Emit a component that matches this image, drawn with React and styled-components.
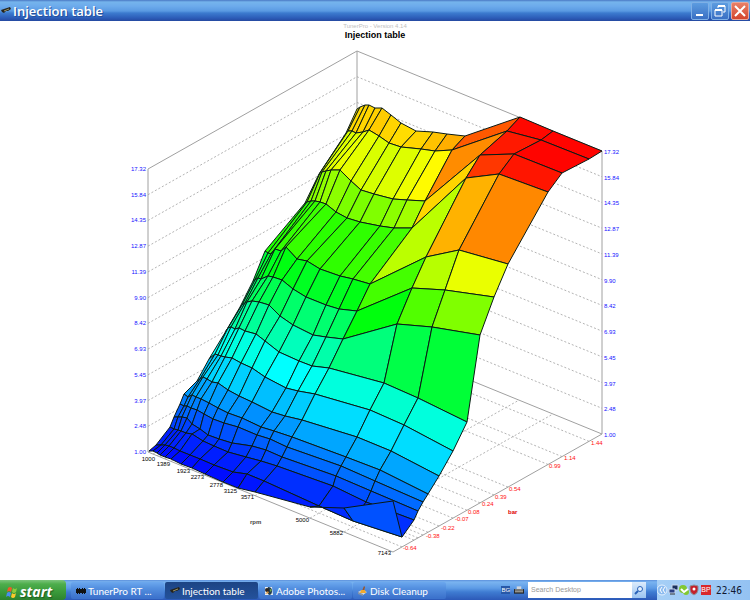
import React from 'react'
import styled, { createGlobalStyle } from 'styled-components'

// Screen positions of the mesh, back row (highest pressure) first,
// every row running from 1000 rpm to 7143 rpm.
const mesh = [
  [[357, 109], [360, 107], [365, 105], [369, 105], [375, 108], [382, 108], [391, 115], [401, 123], [416, 131], [433, 132], [447, 134], [465, 136], [520, 117], [553, 131], [602, 151]],
  [[346, 133], [348, 131], [352, 131], [356, 133], [363, 132], [369, 130], [379, 136], [389, 143], [401, 147], [421, 149], [435, 151], [452, 150], [507, 131], [541, 140], [589, 159]],
  [[319, 174], [320, 173], [322, 172], [326, 171], [331, 170], [340, 170], [351, 181], [361, 190], [374, 194], [393, 199], [407, 200], [425, 201], [480, 155], [514, 154], [562, 173]],
  [[305, 203], [307, 202], [311, 201], [315, 201], [320, 202], [326, 204], [336, 212], [347, 218], [360, 222], [380, 226], [394, 228], [412, 228], [466, 178], [499, 174], [548, 192]],
  [[265, 251], [268, 253], [271, 254], [275, 249], [281, 251], [286, 247], [297, 259], [307, 261], [320, 269], [340, 276], [353, 279], [370, 284], [426, 257], [459, 250], [508, 264]],
  [[253, 281], [255, 280], [258, 278], [261, 279], [268, 276], [273, 277], [282, 280], [293, 289], [306, 297], [326, 305], [339, 309], [357, 311], [412, 288], [445, 290], [494, 297]],
  [[240, 307], [242, 305], [245, 303], [247, 302], [252, 301], [259, 302], [269, 305], [280, 316], [293, 325], [313, 335], [326, 337], [343, 339], [397, 324], [432, 327], [480, 335]],
  [[226, 331], [228, 328], [231, 327], [235, 329], [239, 328], [245, 331], [256, 334], [265, 341], [279, 352], [299, 361], [312, 366], [329, 368], [384, 383], [418, 398], [467, 422]],
  [[209, 359], [215, 354], [218, 355], [221, 356], [225, 357], [232, 358], [241, 363], [252, 368], [265, 377], [286, 388], [298, 391], [315, 394], [370, 410], [404, 425], [453, 451]],
  [[197, 381], [200, 379], [203, 377], [207, 379], [212, 382], [218, 383], [228, 390], [239, 396], [252, 402], [272, 412], [285, 416], [302, 420], [357, 437], [391, 451], [439, 476]],
  [[184, 394], [188, 397], [192, 395], [196, 397], [201, 399], [209, 403], [218, 408], [228, 413], [242, 418], [261, 427], [274, 431], [292, 437], [346, 457], [380, 470], [428, 494]],
  [[180, 404], [184, 406], [187, 406], [191, 408], [197, 410], [204, 414], [213, 419], [224, 423], [238, 427], [257, 435], [270, 439], [287, 447], [341, 466], [375, 481], [423, 502]],
  [[174, 417], [178, 417], [182, 417], [187, 418], [192, 424], [200, 429], [208, 435], [219, 439], [232, 443], [252, 446], [266, 450], [282, 457], [336, 476], [371, 491], [418, 511]],
  [[170, 427], [174, 429], [178, 430], [181, 431], [186, 433], [192, 434], [203, 441], [214, 446], [228, 452], [246, 457], [261, 461], [277, 466], [333, 486], [366, 502], [414, 520]],
  [[156, 445], [161, 445], [165, 445], [169, 446], [174, 448], [180, 451], [190, 455], [200, 459], [214, 465], [233, 472], [247, 474], [264, 481], [319, 506], [353, 521], [402, 537]],
  [[149, 451], [153, 451], [157, 453], [160, 455], [165, 457], [171, 459], [181, 464], [192, 468], [205, 474], [223, 482], [238, 488], [255, 492], [310, 507], [344, 508], [393, 501]],
]

const left = { x: 148, y: 452 }
const front = { x: 393, y: 552 }
const right = { x: 602, y: 434 }
const back = { x: 357, y: 334 }
const boxHeight = 283
const rpmSlope = (front.y - left.y) / (front.x - left.x)
const barSlope = (right.y - front.y) / (right.x - front.x)

const levels = ['17.32', '15.84', '14.35', '12.87', '11.39', '9.90', '8.42', '6.93', '5.45', '3.97', '2.48', '1.00']

const rpmLabels = [
  ['1000', 155, 461],
  ['1389', 170, 466],
  ['1923', 190, 473],
  ['2273', 204, 479],
  ['2778', 223, 487],
  ['3125', 237, 493],
  ['3571', 254, 499],
  ['5000', 309, 522],
  ['5882', 343, 535],
  ['7143', 391, 555],
]

const barLabels = [
  ['-0.64', 403, 550],
  ['-0.38', 426, 538],
  ['-0.22', 441, 530],
  ['-0.07', 455, 521],
  ['0.08', 468, 514],
  ['0.24', 482, 506],
  ['0.39', 495, 499],
  ['0.54', 509, 491],
  ['0.99', 549, 468],
  ['1.14', 564, 460],
  ['1.44', 591, 445],
]

function floorY(row, column) {
  const start = mesh[mesh.length - 1][column]
  const startY = front.y + (start[0] - front.x) * rpmSlope
  return startY + (mesh[row][column][0] - start[0]) * barSlope
}

function cellColor(row, column) {
  const corners = [[row, column], [row, column + 1], [row + 1, column + 1], [row + 1, column]]
  const total = corners.reduce((sum, [r, c]) => sum + floorY(r, c) - mesh[r][c][1], 0)
  const ratio = Math.min(1, Math.max(0, total / 4 / boxHeight))
  return `hsl(${Math.round(240 * (1 - ratio))}, 100%, 50%)`
}

function Surface() {
  const cells = []
  for (let row = 0; row < mesh.length - 1; row++) {
    for (let column = 0; column < mesh[row].length - 1; column++) {
      const points = [mesh[row][column], mesh[row][column + 1], mesh[row + 1][column + 1], mesh[row + 1][column]]
      cells.push(<Cell key={`${row}-${column}`} points={points.join(' ')} fill={cellColor(row, column)} />)
    }
  }
  return <g>{cells}</g>
}

function Grid() {
  const step = boxHeight / (levels.length - 1)
  const lastRow = mesh[mesh.length - 1]
  return (
    <g>
      {levels.slice(1, -1).map((level, i) => {
        const drop = boxHeight - (i + 1) * step
        return (
          <Dashed
            key={level}
            points={`${left.x},${left.y - drop} ${back.x},${back.y - drop} ${right.x},${right.y - drop}`}
          />
        )
      })}
      {mesh.slice(1, -1).map((row) => {
        const x = row[14][0]
        const y = front.y + (x - front.x) * barSlope
        return <Dashed key={x} points={`${x},${y} ${x - 245},${y - 100}`} />
      })}
      {lastRow.slice(1, -1).map(([x]) => {
        const y = front.y + (x - front.x) * rpmSlope
        return <Dashed key={x} points={`${x},${y} ${x + 209},${y - 118}`} />
      })}
      <Axis
        points={`${left.x},${left.y - boxHeight} ${back.x},${back.y - boxHeight} ${right.x},${right.y - boxHeight} ${right.x},${right.y} ${front.x},${front.y} ${left.x},${left.y} ${left.x},${left.y - boxHeight}`}
      />
      <Axis points={`${back.x},${back.y - boxHeight} ${back.x},${back.y} ${right.x},${right.y}`} />
      <Axis points={`${back.x},${back.y} ${left.x},${left.y}`} />
    </g>
  )
}

function Labels() {
  const step = boxHeight / (levels.length - 1)
  return (
    <g>
      {levels.map((level, i) => (
        <React.Fragment key={level}>
          <Tick $color="#1414ff" x="146" y={171 + i * step} textAnchor="end">{level}</Tick>
          <Tick $color="#1414ff" x="604" y={154 + i * step}>{level}</Tick>
        </React.Fragment>
      ))}
      {rpmLabels.map(([text, x, y]) => (
        <Tick key={text} $color="#000" x={x} y={y} textAnchor="end">{text}</Tick>
      ))}
      {barLabels.map(([text, x, y]) => (
        <Tick key={text} $color="#ff1010" x={x} y={y}>{text}</Tick>
      ))}
      <AxisName $color="#444" x="250" y="524">rpm</AxisName>
      <AxisName $color="#e00000" x="508" y="514">bar</AxisName>
    </g>
  )
}

function GunIcon() {
  return (
    <svg width="10" height="8" viewBox="0 0 10 8">
      <path d="M0 3 L6 1 L9 0 L10 2 L7 4 L5 4 L3 6 L1 5 Z" fill="#26241c" />
      <path d="M3 4 L8 2" stroke="#9a9468" strokeWidth="1" />
    </svg>
  )
}

function ChipIcon() {
  return (
    <svg width="10" height="8" viewBox="0 0 10 8">
      <path d="M0 2h10v4H0z" fill="#111" />
      <path d="M1.5 1v6M3.5 1v6M6.5 1v6M8.5 1v6" stroke="#111" strokeWidth="1" />
    </svg>
  )
}

function PhotoshopIcon() {
  return (
    <svg width="10" height="10" viewBox="0 0 10 10">
      <path d="M1 1h7l1 8H1z" fill="#e8eef4" />
      <path d="M4 1q4 0 4 4t-3 4q-3-3-1-8" fill="#233c4c" />
      <circle cx="3" cy="4" r="2" fill="#2d2520" />
      <path d="M1 8L4 5l1 2z" fill="#d88d32" />
      <path d="M6 3l2 1-2 2z" fill="#72a944" />
    </svg>
  )
}

function CleanupIcon() {
  return (
    <svg width="10" height="10" viewBox="0 0 10 10">
      <path d="M0 6l4-2 5 2-4 3z" fill="#d6dbe0" />
      <path d="M0 6l5 2v2L0 8z" fill="#8995a3" />
      <path d="M6 0l1 1-1 4H4z" fill="#9a5428" />
      <path d="M3 4h4l1 3H2z" fill="#f2a92d" />
    </svg>
  )
}

function FlagIcon() {
  return (
    <svg width="12" height="12" viewBox="0 0 12 12">
      <path d="M2 2q2-2 4 0L5 6q-2-2-4 0z" fill="#f05a28" />
      <path d="M7 2q2 2 4 0l-1 4q-2 2-4 0z" fill="#8ccc3c" />
      <path d="M1 7q2-2 4 0l-1 4q-2-2-4 0z" fill="#4a8cf0" />
      <path d="M6 7q2 2 4 0l-1 4q-2 2-4 0z" fill="#fcc82c" />
    </svg>
  )
}

function TrayIcons() {
  return (
    <svg width="55" height="12" viewBox="0 0 55 12" role="img" aria-label="Notification icons">
      <circle cx="5" cy="6" r="5" fill="#8dbcf0" stroke="#e3f0ff" />
      <path d="M5 3L3 6l2 3M8 3L6 6l2 3" stroke="#fff" fill="none" />
      <path d="M15 1h6v5h-6z" fill="#19305e" stroke="#c8d8ec" strokeWidth="1" />
      <path d="M12 5h6v4h-6z" fill="#2a3f83" stroke="#c8d8ec" strokeWidth="1" />
      <path d="M13 10h5" stroke="#333" />
      <circle cx="26" cy="5" r="4" fill="#82c832" />
      <circle cx="29" cy="8" r="3" fill="#82c832" />
      <path d="M24 5l3 3 4-3" stroke="#fff" strokeWidth="2" fill="none" />
      <path d="M33 2l4-1 4 1v4q0 3-4 5-4-2-4-5z" fill="#c4202c" stroke="#8c9098" strokeWidth="1" />
      <circle cx="37" cy="5" r="1.5" fill="#fff" />
      <path d="M44 1h10v10H44z" fill="#d8282c" />
      <text x="49" y="8" fontSize="7" fill="#fff" textAnchor="middle">BP</text>
    </svg>
  )
}

export default function App() {
  return (
    <Desktop>
      <GlobalStyle />
      <TitleBar>
        <GunIcon />
        <WindowTitle>Injection table</WindowTitle>
        <WindowButton aria-label="Minimize">
          <svg width="14" height="14" viewBox="0 0 14 14"><path d="M3 11h7" stroke="#fff" strokeWidth="2" /></svg>
        </WindowButton>
        <WindowButton aria-label="Restore">
          <svg width="14" height="14" viewBox="0 0 14 14" fill="none" stroke="#fff">
            <path d="M5 4V2h7v6h-2" />
            <path d="M5 2h7" strokeWidth="2" />
            <path d="M2 6h7v6H2z" />
            <path d="M2 6h7" strokeWidth="2" />
          </svg>
        </WindowButton>
        <WindowButton $close aria-label="Close">
          <svg width="14" height="14" viewBox="0 0 14 14"><path d="M2 2l10 10M12 2L2 12" stroke="#fff" strokeWidth="2" /></svg>
        </WindowButton>
      </TitleBar>
      <Main>
        <Version>TunerPro - Version 4.14</Version>
        <ChartTitle>Injection table</ChartTitle>
        <Chart viewBox="0 42 750 538" role="img" aria-label="Injection table surface">
          <Grid />
          <Surface />
          <Labels />
        </Chart>
      </Main>
      <TaskBar>
        <StartButton><FlagIcon />start</StartButton>
        <Tasks>
          <Task><ChipIcon />TunerPro RT ...</Task>
          <Task $active><GunIcon />Injection table</Task>
          <Task><PhotoshopIcon />Adobe Photos...</Task>
          <Task><CleanupIcon />Disk Cleanup</Task>
        </Tasks>
        <DeskBand>
          <Language>BG</Language>
          <svg width="10" height="10" viewBox="0 0 11 10">
            <path d="M3 1h5v3H3z" fill="#cfd6df" />
            <path d="M0 4h11v5H0z" fill="#222" />
            <path d="M1 5h9M1 7h9" stroke="#d8d8d0" strokeWidth="1" />
          </svg>
          <Search>
            <SearchInput aria-label="Search Desktop" placeholder="Search Desktop" />
            <SearchButton aria-label="Search">
              <svg width="10" height="10" viewBox="0 0 10 10">
                <circle cx="6" cy="4" r="2.5" fill="#e4f2ff" stroke="#2a62b8" />
                <path d="M4 6L1 9" stroke="#2a62b8" strokeWidth="2" />
              </svg>
            </SearchButton>
          </Search>
        </DeskBand>
        <Tray>
          <TrayIcons />
          <Clock>22:46</Clock>
        </Tray>
      </TaskBar>
    </Desktop>
  )
}

const GlobalStyle = createGlobalStyle`
  * {
    box-sizing: border-box;
  }

  body {
    margin: 0;
    background: #fff;
    font-family: 'Liberation Sans', Arial, sans-serif;
  }

  button, input {
    font: inherit;
    border: 0;
    padding: 0;
  }

  svg {
    flex: none;
  }
`

const Desktop = styled.div`
  display: flex;
  flex-direction: column;
  min-height: 100vh;
`

const TitleBar = styled.header`
  display: flex;
  align-items: center;
  gap: 2px;
  height: 21px;
  padding: 0 1px;
  background: linear-gradient(#4a78c4 0, #75b4ec 2px, #6dabec 6px, #5a9ae2 11px, #3c7bcf 13px, #2c5cb8 18px, #2549a0 21px);
`

const WindowTitle = styled.h1`
  flex: 1;
  margin: 0;
  font-family: 'Open Sans', sans-serif;
  font-size: 13px;
  font-weight: 600;
  line-height: 20px;
  color: #fff;
  text-shadow: 1px 1px 0 #24509c;
`

const WindowButton = styled.button`
  display: flex;
  align-items: center;
  justify-content: center;
  width: 18px;
  height: 18px;
  border: 1px solid ${(props) => (props.$close ? '#e8a79c' : '#7fb0e6')};
  border-radius: 2px;
  background: ${(props) => (props.$close ? 'linear-gradient(#e88068, #d4452c)' : 'linear-gradient(#5c9ce0, #3a70c4)')};
`

const Main = styled.main`
  flex: 1;
  text-align: center;
`

const Version = styled.p`
  margin: 2px 0 0;
  font-size: 6px;
  line-height: 6px;
  color: #c0c0c0;
`

const ChartTitle = styled.h2`
  margin: 0;
  font-size: 9px;
  line-height: 13px;
  color: #000;
`

const Chart = styled.svg`
  display: block;
  width: 100%;
  height: auto;
`

const Cell = styled.polygon`
  stroke: #0a1a14;
  stroke-width: 1;
  stroke-linejoin: round;
`

const Axis = styled.polyline`
  fill: none;
  stroke: #a0a0a0;
  stroke-width: 1;
`

const Dashed = styled.polyline`
  fill: none;
  stroke: #b4b4b4;
  stroke-width: 1;
  stroke-dasharray: 2 2;
`

const Tick = styled.text`
  font-size: 6px;
  fill: ${(props) => props.$color};
`

const AxisName = styled(Tick)`
  font-weight: bold;
`

const TaskBar = styled.footer`
  display: flex;
  height: 20px;
  background: linear-gradient(#5c90dc 0, #7ab4f0 2px, #5e9ce6 8px, #3f7cd2 12px, #2c59b8 20px);
`

const StartButton = styled.button`
  display: flex;
  align-items: center;
  gap: 2px;
  width: 66px;
  padding: 3px 0 0 6px;
  border-radius: 0 4px 4px 0;
  background: linear-gradient(#7cc47c 0, #4eae4c 4px, #3a9a3a 12px, #2c822e 20px);
  font-family: 'Open Sans', sans-serif;
  font-size: 14px;
  font-style: italic;
  font-weight: bold;
  line-height: 17px;
  color: #fff;
  text-shadow: 1px 1px 1px #1c5c20;
`

const Tasks = styled.nav`
  display: flex;
  flex: 1;
  gap: 1px;
  padding: 2px 0 1px 5px;
`

const Task = styled.button`
  display: flex;
  align-items: center;
  gap: 2px;
  width: 93px;
  padding-left: 5px;
  border-radius: 2px;
  background: ${(props) =>
    props.$active ? 'linear-gradient(#1c4484, #24529c)' : 'linear-gradient(#6ca8ee 0, #5490e0 6px, #3c72cc 16px)'};
  font-family: Lato, sans-serif;
  font-size: 10px;
  color: #fff;
  white-space: nowrap;
`

const DeskBand = styled.div`
  display: flex;
  align-items: center;
  gap: 4px;
`

const Language = styled.span`
  background: #2858a8;
  font-size: 6px;
  line-height: 8px;
  color: #fff;
`

const Search = styled.form`
  display: flex;
  height: 16px;
`

const SearchInput = styled.input`
  width: 104px;
  padding: 0 3px 2px;
  background: #fff;
  font-size: 7px;

  &::placeholder {
    color: #999;
  }
`

const SearchButton = styled.button`
  display: flex;
  align-items: center;
  justify-content: center;
  width: 14px;
  background: linear-gradient(#dcecfc, #9cc4f0);
`

const Tray = styled.div`
  display: flex;
  align-items: center;
  gap: 4px;
  margin-left: 11px;
  padding-right: 8px;
  background: linear-gradient(90deg, #a6cff6, #94c2f2);
`

const Clock = styled.time`
  font-family: 'DejaVu Sans Condensed', 'Noto Sans', sans-serif;
  font-size: 10px;
  color: #101830;
`
